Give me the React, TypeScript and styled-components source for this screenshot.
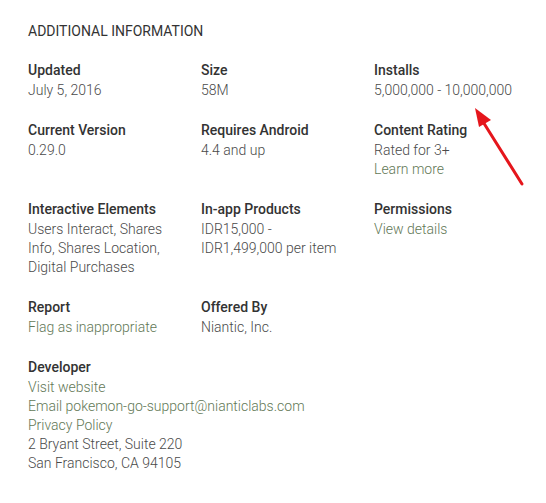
import React from "react";
import styled, { createGlobalStyle } from "styled-components";

const GlobalStyle = createGlobalStyle`
  html, body {
    margin: 0;
    padding: 0;
    background: #ffffff;
  }
  body {
    font-family: Roboto, "Noto Sans", Arial, sans-serif;
    -webkit-font-smoothing: antialiased;
  }
`;

const Section = styled.section`
  position: relative;
  width: 546px;
  min-height: 503px;
  box-sizing: border-box;
  padding: 21px 0 0 28px;
  background: #fff;
`;

const Heading = styled.h2`
  margin: 0 0 18px;
  font-size: 14px;
  line-height: 20px;
  font-weight: 400;
  text-transform: uppercase;
  color: #333333;
  letter-spacing: 0;
`;

const MetaGrid = styled.div`
  display: grid;
  grid-template-columns: repeat(3, 173px);
  row-gap: 19px;
  align-items: start;
`;

const Meta = styled.div<{ $wide?: boolean }>`
  display: flex;
  flex-direction: column;
  grid-column: ${(p) => (p.$wide ? "1 / -1" : "auto")};
`;

const Title = styled.div`
  font-size: 14px;
  line-height: 22px;
  font-weight: 500;
  color: #333333;
`;

const Value = styled.div<{ $link?: boolean }>`
  font-size: 14px;
  line-height: 19px;
  font-weight: 300;
  color: ${(p) => (p.$link ? "#627856" : "#4a4a4a")};
  max-width: 150px;
  white-space: ${(p) => (p.$link ? "nowrap" : "normal")};
`;

const WideValue = styled(Value)`
  max-width: none;
  white-space: nowrap;
`;

const Annotation = styled.svg`
  position: absolute;
  left: 466px;
  top: 100px;
  width: 64px;
  height: 90px;
  overflow: visible;
`;

type Line = { text: string; link?: boolean };
type Item = { title: string; lines: Line[] };

const items: Item[] = [
  { title: "Updated", lines: [{ text: "July 5, 2016" }] },
  { title: "Size", lines: [{ text: "58M" }] },
  { title: "Installs", lines: [{ text: "5,000,000 - 10,000,000" }] },
  { title: "Current Version", lines: [{ text: "0.29.0" }] },
  { title: "Requires Android", lines: [{ text: "4.4 and up" }] },
  {
    title: "Content Rating",
    lines: [{ text: "Rated for 3+" }, { text: "Learn more", link: true }],
  },
  {
    title: "Interactive Elements",
    lines: [{ text: "Users Interact, Shares Info, Shares Location, Digital Purchases" }],
  },
  {
    title: "In-app Products",
    lines: [{ text: "IDR15,000 - IDR1,499,000 per item" }],
  },
  { title: "Permissions", lines: [{ text: "View details", link: true }] },
  { title: "Report", lines: [{ text: "Flag as inappropriate", link: true }] },
  { title: "Offered By", lines: [{ text: "Niantic, Inc." }] },
];

const developer: Line[] = [
  { text: "Visit website", link: true },
  { text: "Email pokemon-go-support@nianticlabs.com", link: true },
  { text: "Privacy Policy", link: true },
  { text: "2 Bryant Street, Suite 220" },
  { text: "San Francisco, CA 94105" },
];

export default function App() {
  return (
    <>
      <GlobalStyle />
      <Section>
        <Heading>Additional Information</Heading>
        <MetaGrid>
          {items.map((item) => (
            <Meta key={item.title}>
              <Title>{item.title}</Title>
              {item.lines.map((l) => (
                <Value key={l.text} $link={l.link}>
                  {l.text}
                </Value>
              ))}
            </Meta>
          ))}
          <Meta $wide>
            <Title>Developer</Title>
            {developer.map((l) => (
              <WideValue key={l.text} $link={l.link}>
                {l.text}
              </WideValue>
            ))}
          </Meta>
        </MetaGrid>
        <Annotation viewBox="0 0 64 90">
          <line x1="56" y1="84" x2="14" y2="17" stroke="#e5161c" strokeWidth="3" strokeLinecap="round" />
          <polygon points="9,8 25,20 13,27" fill="#e5161c" />
        </Annotation>
      </Section>
    </>
  );
}
